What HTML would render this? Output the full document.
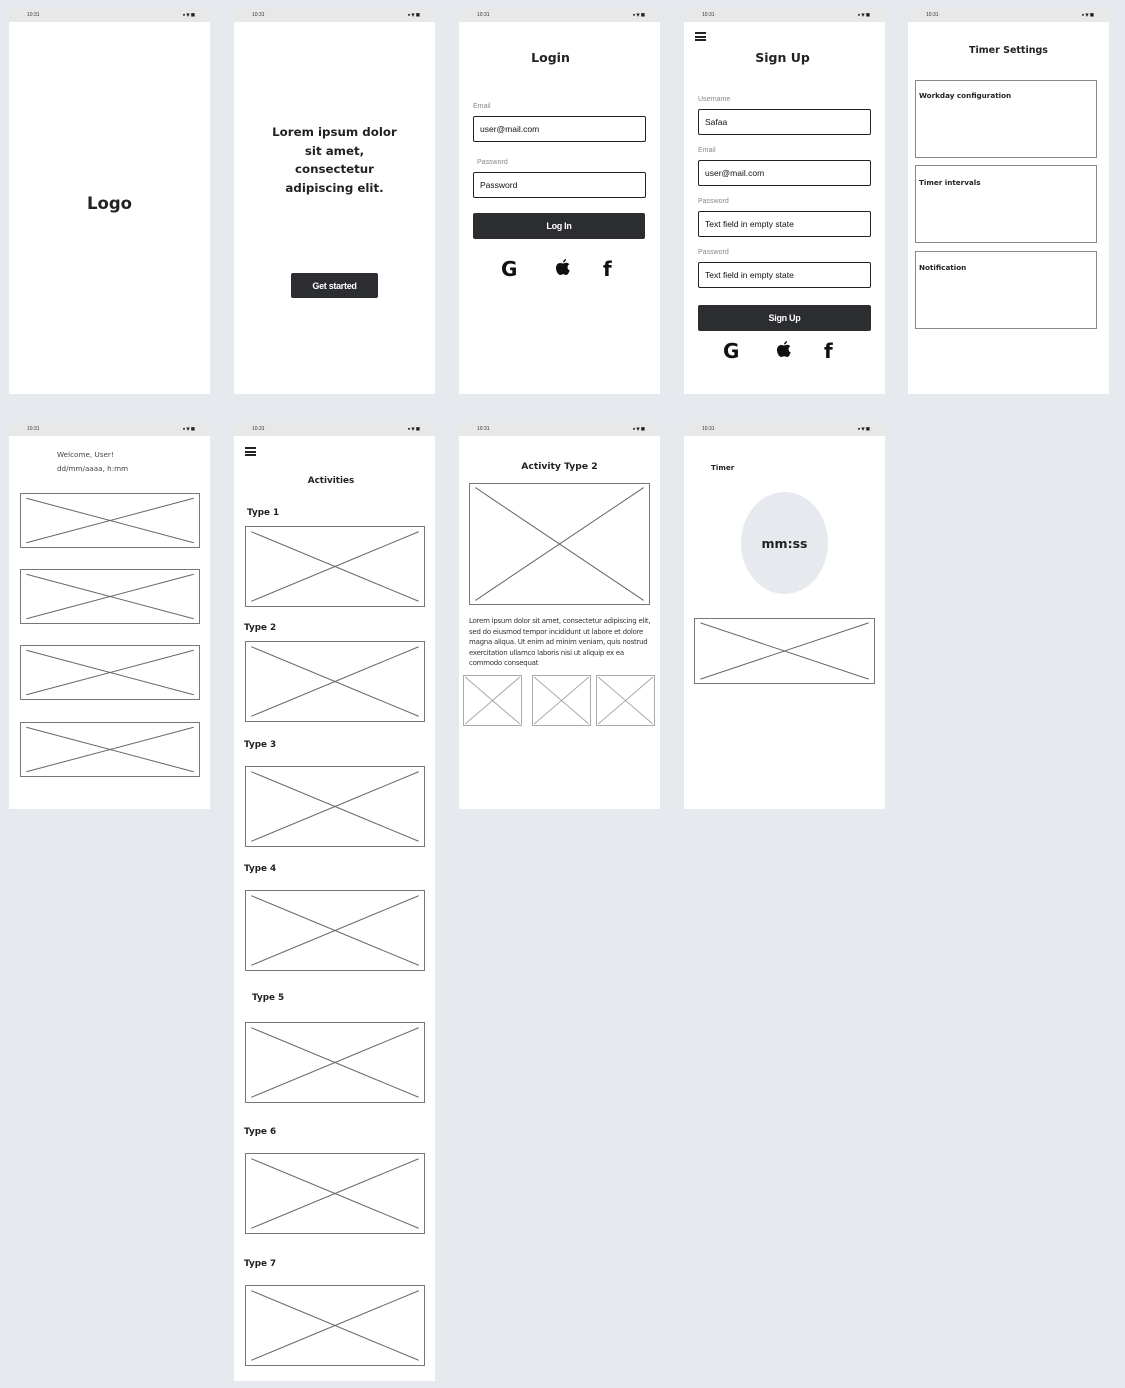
<!DOCTYPE html>
<html><head><meta charset="utf-8"><style>
*{margin:0;padding:0;box-sizing:border-box}
body{width:1125px;height:1388px;background:#e6e9ed;position:relative;overflow:hidden;font-family:"DejaVu Sans","Liberation Sans",sans-serif;color:#222}
.a{position:absolute}
.fr{position:absolute;background:#fff}
.sb{position:absolute;left:0;right:0;top:0;height:13px;background:#e8e8e8}
.sb .t{position:absolute;left:18px;top:3px;font:5px "Liberation Sans",sans-serif;color:#333}
.sb .i{position:absolute;right:14px;top:2px;font:7px sans-serif;color:#222;letter-spacing:1px}
.x{position:absolute;border:1px solid #777;background:#fff}
.x svg{position:absolute;left:0;top:0;width:100%;height:100%}
.b{font-weight:bold}
.lab{position:absolute;font:7px "Liberation Sans",sans-serif;color:#888}
.inp{position:absolute;border:1.5px solid #222;border-radius:2px;font:8.5px "Liberation Sans",sans-serif;color:#111;padding:0 0 0 6px;display:flex;align-items:center;background:#fff}
.btn{position:absolute;background:#2c2d30;color:#fff;border-radius:2px;font:bold 9px "Liberation Sans",sans-serif;display:flex;align-items:center;justify-content:center;letter-spacing:-0.3px}
.ham{position:absolute;width:11px;height:9px;border-top:2px solid #222;border-bottom:2px solid #222}
.ham:after{content:"";position:absolute;left:0;right:0;top:1.5px;height:2px;background:#222}
.ico{position:absolute;font:bold 20px "DejaVu Sans",sans-serif;color:#111;line-height:1}
.gb{position:absolute;border:1px solid #888;background:#fff}
</style></head><body>

<!-- Row 1 -->
<div class="fr" style="left:9px;top:9px;width:201px;height:385px"><div class="sb"><span class="t">10:31</span><span class="i">▪▾■</span></div>
<div class="a b" style="left:0;width:201px;top:185px;text-align:center;font-size:16.5px">Logo</div></div>

<div class="fr" style="left:234px;top:9px;width:201px;height:385px"><div class="sb"><span class="t">10:31</span><span class="i">▪▾■</span></div>
<div class="a b" style="left:0;width:201px;top:114px;text-align:center;font-size:11.8px;line-height:18.7px">Lorem ipsum dolor<br>sit amet,<br>consectetur<br>adipiscing elit.</div>
<div class="btn" style="left:57px;top:264px;width:87px;height:25px">Get started</div></div>

<div class="fr" style="left:459px;top:9px;width:201px;height:385px"><div class="sb"><span class="t">10:31</span><span class="i">▪▾■</span></div>
<div class="a b" style="left:0;width:183px;top:41px;text-align:center;font-size:12.5px">Login</div>
<div class="lab" style="left:14px;top:94px">Email</div>
<div class="inp" style="left:14px;top:107px;width:173px;height:26px">user@mail.com</div>
<div class="lab" style="left:18px;top:150px">Password</div>
<div class="inp" style="left:14px;top:163px;width:173px;height:26px">Password</div>
<div class="btn" style="left:14px;top:204px;width:172px;height:26px">Log In</div>
<div class="ico" style="left:42px;top:250px">G</div>
<svg class="a" style="left:96px;top:249px" width="16" height="19" viewBox="0 0 16 19"><path d="M11 1c0 2-1.5 3.5-3 3.5C8 3 9.5 1.2 11 1zM8 5.5c1 0 2-.8 3.3-.8 1 0 2.3.5 3 1.6-2.6 1.5-2.2 5.2.4 6.2-.7 2-2 4.5-3.5 4.5-1.2 0-1.6-.7-3-.7s-1.9.7-3 .7C3.4 17 1 13.5 1 10c0-3.2 2.1-5 4-5 1.2 0 2.1.5 3 .5z" fill="#111"/></svg>
<div class="ico" style="left:144px;top:250px">f</div></div>

<div class="fr" style="left:684px;top:9px;width:201px;height:385px"><div class="sb"><span class="t">10:31</span><span class="i">▪▾■</span></div>
<div class="ham" style="left:11px;top:23px"></div>
<div class="a b" style="left:0;width:197px;top:41px;text-align:center;font-size:12.5px">Sign Up</div>
<div class="lab" style="left:14px;top:87px">Username</div>
<div class="inp" style="left:14px;top:100px;width:173px;height:26px">Safaa</div>
<div class="lab" style="left:14px;top:138px">Email</div>
<div class="inp" style="left:14px;top:151px;width:173px;height:26px">user@mail.com</div>
<div class="lab" style="left:14px;top:189px">Password</div>
<div class="inp" style="left:14px;top:202px;width:173px;height:26px">Text field in empty state</div>
<div class="lab" style="left:14px;top:240px">Password</div>
<div class="inp" style="left:14px;top:253px;width:173px;height:26px">Text field in empty state</div>
<div class="btn" style="left:14px;top:296px;width:173px;height:26px">Sign Up</div>
<div class="ico" style="left:39px;top:332px">G</div>
<svg class="a" style="left:92px;top:331px" width="16" height="19" viewBox="0 0 16 19"><path d="M11 1c0 2-1.5 3.5-3 3.5C8 3 9.5 1.2 11 1zM8 5.5c1 0 2-.8 3.3-.8 1 0 2.3.5 3 1.6-2.6 1.5-2.2 5.2.4 6.2-.7 2-2 4.5-3.5 4.5-1.2 0-1.6-.7-3-.7s-1.9.7-3 .7C3.4 17 1 13.5 1 10c0-3.2 2.1-5 4-5 1.2 0 2.1.5 3 .5z" fill="#111"/></svg>
<div class="ico" style="left:140px;top:332px">f</div></div>

<div class="fr" style="left:908px;top:9px;width:201px;height:385px"><div class="sb"><span class="t">10:31</span><span class="i">▪▾■</span></div>
<div class="a b" style="left:0;width:201px;top:36px;text-align:center;font-size:9.5px">Timer Settings</div>
<div class="gb" style="left:7px;top:71px;width:182px;height:78px"><div class="a b" style="left:3px;top:10px;font-size:7.2px">Workday configuration</div></div>
<div class="gb" style="left:7px;top:156px;width:182px;height:78px"><div class="a b" style="left:3px;top:12px;font-size:7.2px">Timer intervals</div></div>
<div class="gb" style="left:7px;top:242px;width:182px;height:78px"><div class="a b" style="left:3px;top:11px;font-size:7.2px">Notification</div></div></div>

<!-- Row 2 -->
<div class="fr" style="left:9px;top:423px;width:201px;height:386px"><div class="sb"><span class="t">10:31</span><span class="i">▪▾■</span></div>
<div class="a" style="left:48px;top:25px;font-size:7.2px;color:#444;line-height:14px">Welcome, User!<br>dd/mm/aaaa, h:mm</div>
<div class="x" style="left:11px;top:70px;width:180px;height:55px"><svg viewBox="0 0 100 100" preserveAspectRatio="none"><path d="M3 8L97 92M3 92L97 8" stroke="#666" stroke-width="1" vector-effect="non-scaling-stroke"/></svg></div>
<div class="x" style="left:11px;top:146px;width:180px;height:55px"><svg viewBox="0 0 100 100" preserveAspectRatio="none"><path d="M3 8L97 92M3 92L97 8" stroke="#666" stroke-width="1" vector-effect="non-scaling-stroke"/></svg></div>
<div class="x" style="left:11px;top:222px;width:180px;height:55px"><svg viewBox="0 0 100 100" preserveAspectRatio="none"><path d="M3 8L97 92M3 92L97 8" stroke="#666" stroke-width="1" vector-effect="non-scaling-stroke"/></svg></div>
<div class="x" style="left:11px;top:299px;width:180px;height:55px"><svg viewBox="0 0 100 100" preserveAspectRatio="none"><path d="M3 8L97 92M3 92L97 8" stroke="#666" stroke-width="1" vector-effect="non-scaling-stroke"/></svg></div></div>

<div class="fr" style="left:234px;top:423px;width:201px;height:958px"><div class="sb"><span class="t">10:31</span><span class="i">▪▾■</span></div>
<div class="ham" style="left:11px;top:24px"></div>
<div class="a b" style="left:0;width:194px;top:53px;text-align:center;font-size:8.8px">Activities</div>
<div class="a b" style="left:13px;top:85px;font-size:8.8px">Type 1</div>
<div class="x" style="left:11px;top:103px;width:180px;height:81px"><svg viewBox="0 0 100 100" preserveAspectRatio="none"><path d="M3 6L97 94M3 94L97 6" stroke="#666" stroke-width="1" vector-effect="non-scaling-stroke"/></svg></div>
<div class="a b" style="left:10px;top:200px;font-size:8.8px">Type 2</div>
<div class="x" style="left:11px;top:218px;width:180px;height:81px"><svg viewBox="0 0 100 100" preserveAspectRatio="none"><path d="M3 6L97 94M3 94L97 6" stroke="#666" stroke-width="1" vector-effect="non-scaling-stroke"/></svg></div>
<div class="a b" style="left:10px;top:317px;font-size:8.8px">Type 3</div>
<div class="x" style="left:11px;top:343px;width:180px;height:81px"><svg viewBox="0 0 100 100" preserveAspectRatio="none"><path d="M3 6L97 94M3 94L97 6" stroke="#666" stroke-width="1" vector-effect="non-scaling-stroke"/></svg></div>
<div class="a b" style="left:10px;top:441px;font-size:8.8px">Type 4</div>
<div class="x" style="left:11px;top:467px;width:180px;height:81px"><svg viewBox="0 0 100 100" preserveAspectRatio="none"><path d="M3 6L97 94M3 94L97 6" stroke="#666" stroke-width="1" vector-effect="non-scaling-stroke"/></svg></div>
<div class="a b" style="left:18px;top:570px;font-size:8.8px">Type 5</div>
<div class="x" style="left:11px;top:599px;width:180px;height:81px"><svg viewBox="0 0 100 100" preserveAspectRatio="none"><path d="M3 6L97 94M3 94L97 6" stroke="#666" stroke-width="1" vector-effect="non-scaling-stroke"/></svg></div>
<div class="a b" style="left:10px;top:704px;font-size:8.8px">Type 6</div>
<div class="x" style="left:11px;top:730px;width:180px;height:81px"><svg viewBox="0 0 100 100" preserveAspectRatio="none"><path d="M3 6L97 94M3 94L97 6" stroke="#666" stroke-width="1" vector-effect="non-scaling-stroke"/></svg></div>
<div class="a b" style="left:10px;top:836px;font-size:8.8px">Type 7</div>
<div class="x" style="left:11px;top:862px;width:180px;height:81px"><svg viewBox="0 0 100 100" preserveAspectRatio="none"><path d="M3 6L97 94M3 94L97 6" stroke="#666" stroke-width="1" vector-effect="non-scaling-stroke"/></svg></div></div>

<div class="fr" style="left:459px;top:423px;width:201px;height:386px"><div class="sb"><span class="t">10:31</span><span class="i">▪▾■</span></div>
<div class="a b" style="left:0;width:201px;top:38px;text-align:center;font-size:9.2px">Activity Type 2</div>
<div class="x" style="left:10px;top:60px;width:181px;height:122px"><svg viewBox="0 0 100 100" preserveAspectRatio="none"><path d="M3 3L97 97M3 97L97 3" stroke="#666" stroke-width="1" vector-effect="non-scaling-stroke"/></svg></div>
<div class="a" style="left:10px;top:193px;width:182px;font-size:7px;line-height:10.6px;color:#333;letter-spacing:-0.25px">Lorem ipsum dolor sit amet, consectetur adipiscing elit, sed do eiusmod tempor incididunt ut labore et dolore magna aliqua. Ut enim ad minim veniam, quis nostrud exercitation ullamco laboris nisi ut aliquip ex ea commodo consequat</div>
<div class="x" style="left:4px;top:252px;width:59px;height:51px;border-color:#aaa"><svg viewBox="0 0 100 100" preserveAspectRatio="none"><path d="M2 2L98 98M2 98L98 2" stroke="#aaa" stroke-width="1" vector-effect="non-scaling-stroke"/></svg></div>
<div class="x" style="left:73px;top:252px;width:59px;height:51px;border-color:#aaa"><svg viewBox="0 0 100 100" preserveAspectRatio="none"><path d="M2 2L98 98M2 98L98 2" stroke="#aaa" stroke-width="1" vector-effect="non-scaling-stroke"/></svg></div>
<div class="x" style="left:137px;top:252px;width:59px;height:51px;border-color:#aaa"><svg viewBox="0 0 100 100" preserveAspectRatio="none"><path d="M2 2L98 98M2 98L98 2" stroke="#aaa" stroke-width="1" vector-effect="non-scaling-stroke"/></svg></div></div>

<div class="fr" style="left:684px;top:423px;width:201px;height:386px"><div class="sb"><span class="t">10:31</span><span class="i">▪▾■</span></div>
<div class="a b" style="left:27px;top:40px;font-size:7.2px">Timer</div>
<div class="a" style="left:57px;top:69px;width:87px;height:102px;border-radius:50%;background:#e6e9ed;display:flex;align-items:center;justify-content:center;font-weight:bold;font-size:12.5px">mm:ss</div>
<div class="x" style="left:10px;top:195px;width:181px;height:66px"><svg viewBox="0 0 100 100" preserveAspectRatio="none"><path d="M3 6L97 94M3 94L97 6" stroke="#666" stroke-width="1" vector-effect="non-scaling-stroke"/></svg></div></div>

</body></html>
